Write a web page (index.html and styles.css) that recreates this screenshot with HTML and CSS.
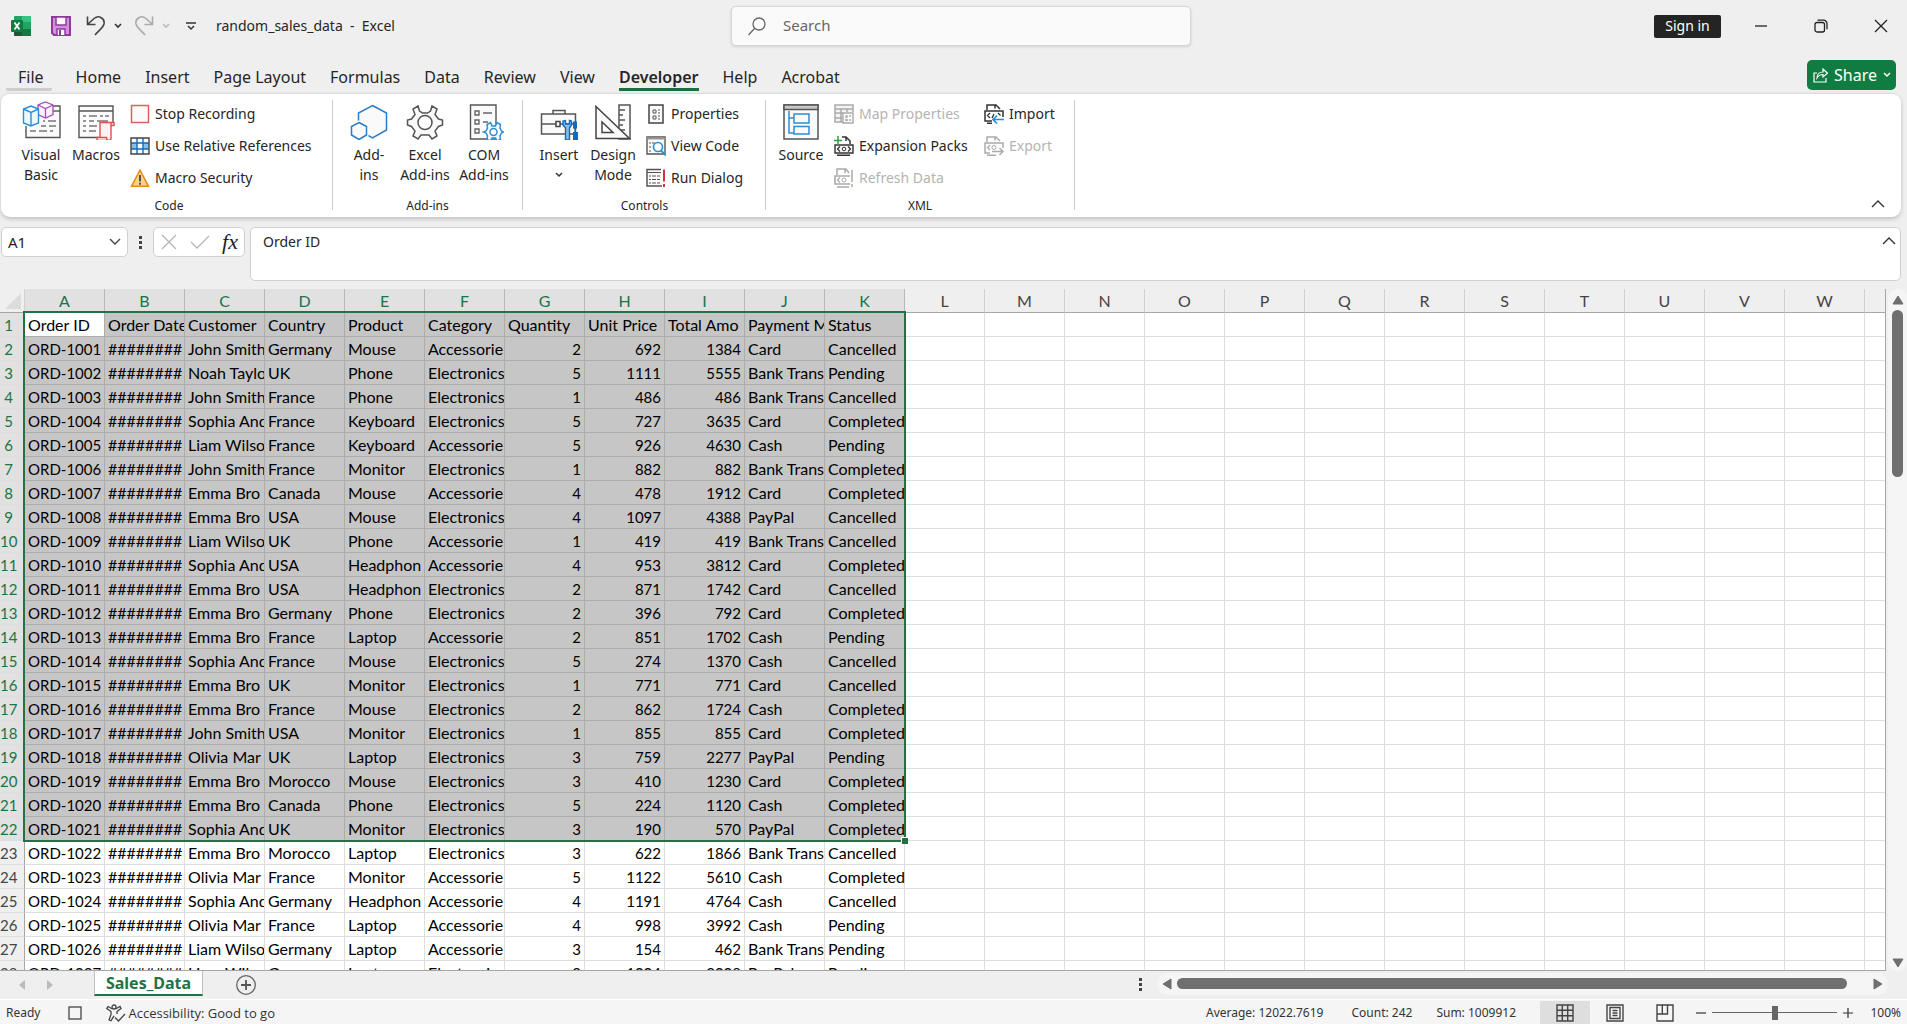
FILE: index.html
```html
<!DOCTYPE html>
<html lang="en">
<head>
<meta charset="utf-8">
<title>random_sales_data - Excel</title>
<link rel="stylesheet" href="styles.css">
</head>
<body>
<header class="titlebar">
  <div class="quick">
    <svg class="logo" width="20" height="20" viewBox="0 0 20 20" aria-hidden="true">
      <rect x="3" width="17" height="20" rx="1" fill="#21a366"/><path d="M11 0h8a1 1 0 0 1 1 1v5h-9z" fill="#33c481"/><path d="M3 6h8v7H3z" fill="#107c41"/><path d="M11 6h9v7h-9z" fill="#21a366"/><path d="M3 13h17v6a1 1 0 0 1-1 1H4a1 1 0 0 1-1-1z" fill="#185c37"/><path d="M11 13h9v6a1 1 0 0 1-1 1h-8z" fill="#107c41"/>
      <rect y="4" width="12" height="12" rx="1" fill="#107c41"/><path d="M3.500 6.500l5 7M8.500 6.500l-5 7" stroke="#fff" stroke-width="1.800"/>
    </svg>
    <button class="tool save" aria-label="Save"><svg width="20" height="20" viewBox="0 0 20 20"><path d="M1 1h18v18H3l-2-2z" fill="#d58fdb" stroke="#8e3a9d" stroke-width="2"/><path d="M5 1h10v8H5z" fill="#fafafa" stroke="#8e3a9d" stroke-width="1.500"/><path d="M6 19v-6h8v6" fill="#fafafa" stroke="#8e3a9d" stroke-width="1.500"/><path d="M9 14v5" stroke="#8e3a9d" stroke-width="2"/></svg></button>
    <button class="tool" aria-label="Undo"><svg width="20" height="22" viewBox="0 0 20 22"><path d="M1.500 1.500v8h8M2 9l6-5.500c5-4 11 0 10 5.500-1 4-6 7-9 11" fill="none" stroke="#444" stroke-width="1.600"/></svg></button>
    <button class="tool" aria-label="Undo list"><svg width="8" height="6" viewBox="0 0 8 6"><path d="M1 1l3 3 3-3" fill="none" stroke="#333" stroke-width="1.600"/></svg></button>
    <button class="tool redo" aria-label="Redo" disabled><svg width="20" height="22" viewBox="0 0 20 22"><path d="M18.500 1.500v8h-8M18 9l-6-5.500C7 -.5 1 3.500 2 9c1 4 6 7 9 11" fill="none" stroke="#aaa" stroke-width="1.600"/></svg></button>
    <button class="tool" aria-label="Redo list" disabled><svg width="8" height="6" viewBox="0 0 8 6"><path d="M1 1l3 3 3-3" fill="none" stroke="#bbb" stroke-width="1.600"/></svg></button>
    <button class="tool custom" aria-label="Customize Quick Access Toolbar"><svg width="10" height="9" viewBox="0 0 10 9"><path d="M0 1h10M2 4l3 3 3-3" fill="none" stroke="#333" stroke-width="1.500"/></svg></button>
    <span class="doc">random_sales_data&nbsp; -&nbsp; Excel</span>
  </div>
  <label class="search"><svg width="18" height="19" viewBox="0 0 18 19"><circle cx="11" cy="7" r="6" fill="none" stroke="#666" stroke-width="1.300"/><path d="M6.500 11.500L.5 18" stroke="#666" stroke-width="1.300"/></svg><input type="search" placeholder="Search" aria-label="Search"></label>
  <div class="window">
    <button class="signin">Sign in</button>
    <button class="win" aria-label="Minimize"><svg width="14" height="14" viewBox="0 0 14 14"><path d="M1 7h12" stroke="#222" stroke-width="1.300"/></svg></button>
    <button class="win" aria-label="Restore"><svg width="14" height="14" viewBox="0 0 14 14"><rect x="1" y="3.500" width="9.500" height="9.500" rx="2" fill="none" stroke="#222" stroke-width="1.300"/><path d="M3.500 1.200h6a3.500 3.500 0 0 1 3.500 3.500v5.500" fill="none" stroke="#222" stroke-width="1.300"/></svg></button>
    <button class="win" aria-label="Close"><svg width="14" height="14" viewBox="0 0 14 14"><path d="M1 1l12 12M13 1L1 13" stroke="#222" stroke-width="1.300"/></svg></button>
  </div>
</header>

<nav class="tabs" aria-label="Ribbon tabs">
  <button class="file">File</button><button>Home</button><button>Insert</button><button>Page Layout</button><button>Formulas</button><button>Data</button><button>Review</button><button>View</button><button class="active">Developer</button><button>Help</button><button>Acrobat</button>
  <button class="share"><svg width="15" height="15" viewBox="0 0 15 15"><path d="M4 5H1v9h12v-4M4 10c0-4 3-6 6-6V1l4.500 4.200L10 9V6.500C7.500 6.500 5.500 7.500 4 10z" fill="none" stroke="#fff" stroke-width="1.200"/></svg>Share<svg width="8" height="6" viewBox="0 0 8 6"><path d="M1 1l3 3 3-3" fill="none" stroke="#fff" stroke-width="1.500"/></svg></button>
</nav>

<section class="ribbon" aria-label="Developer">
  <div class="group code">
    <div class="tools">
      <button class="big w54"><svg width="40" height="40" viewBox="0 0 40 40"><path d="M5 26v11.500h34V6H32" fill="#fafafa" stroke="#555" stroke-width="1.400"/><path d="M32 11h7" stroke="#555" stroke-width="1.400"/><path d="M22 21h2M27 21h8M20 26h5M28 26h7M9 31h6M18 31h8M29 31h3" stroke="#777" stroke-width="1.400"/><path d="M24.500 2L32 5v9.500L24.500 18 17 14.500V5z M17 5l7.500 3.500L32 5M24.500 8.500V18" fill="#faf2fb" stroke="#a64db8" stroke-width="1.300"/><path d="M10 6l7.500 3v14L10 26l-7.500-3V9z M2.500 9l7.500 3.500L17.500 9M10 12.500V26" fill="#eff8fe" stroke="#2b8fd6" stroke-width="1.400"/></svg>Visual<br>Basic</button>
      <button class="big w56"><svg width="40" height="40" viewBox="0 0 40 40"><path d="M37 23V6H3v31.500h20" fill="#fafafa" stroke="#555" stroke-width="1.400"/><path d="M3 11h34" stroke="#555" stroke-width="1.400"/><path d="M7 16h3M13 16h8M24 16h3M29 16h4M7 21h3M13 21h5M21 21h11M7 26h3M13 26h8M7 31h3M13 31h7" stroke="#777" stroke-width="1.400"/><path d="M24 22.500h14v3h-3V38c0 2-1 2.500-2 2.500H21v-3h3z M24 37.500h6.500c0 2 1 3 2.500 3M35 25.500v-3" fill="#fdf1f1" stroke="#e04f4f" stroke-width="1.400"/></svg>Macros</button>
      <div class="stack">
        <button class="small"><svg width="20" height="20" viewBox="0 0 20 20"><rect x="1.500" y="1.500" width="17" height="17" fill="#fafafa" stroke="#e0605c" stroke-width="1.500"/></svg>Stop Recording</button>
        <button class="small"><svg width="20" height="20" viewBox="0 0 20 20"><path d="M1 2h18v16H1z" fill="#fafafa"/><path d="M1 7h6v6H1zM13 7h6v6h-6z" fill="#83beec"/><path d="M1 7h18M1 13h18M7 2v16M13 2v16" stroke="#0f6cbd" stroke-width="1.400"/><path d="M1 2h18v16H1z" fill="none" stroke="#444" stroke-width="1.400"/></svg>Use Relative References</button>
        <button class="small"><svg width="20" height="20" viewBox="0 0 20 20"><path d="M10 2l8.500 16.300h-17z" fill="#f9d48a" stroke="#e08a1e" stroke-width="1.500"/><path d="M10 7v6.500M10 14.800v2" stroke="#333" stroke-width="1.600"/></svg>Macro Security</button>
      </div>
    </div>
    <h2>Code</h2>
  </div>
  <div class="group addins">
    <div class="tools">
      <button class="big w56"><svg width="40" height="40" viewBox="0 0 40 40"><path d="M23.500 5.500L37.500 13v17l-14 8-14-8V13z" fill="#fafafa" stroke="#2b7cc8" stroke-width="1.500"/><path d="M10 22.500l7.500 4v8.500L10 39.500 2.500 35v-8.500z" fill="#fafafa" stroke="#fff" stroke-width="4"/><path d="M10 22.500l7.500 4v8.500L10 39.500 2.500 35v-8.500z" fill="#fafafa" stroke="#2b7cc8" stroke-width="1.500"/></svg>Add-<br>ins</button>
      <button class="big w56"><svg width="40" height="40" viewBox="0 0 40 40"><path d="M14.500 11L13 6l-5 3 2 5.500L6.500 19 2.500 20v5l4 1.500L10 31l-2 5 5 3 3-4h8l3 4 5-3-2-5 3.500-4.500 4-1.500v-5l-4-1-3.500-4.500 2-5.500-5-3-1.500 5-3 2h-5z" fill="#fafafa" stroke="#555" stroke-width="1.500"/><circle cx="20" cy="22.500" r="7" fill="#fff" stroke="#555" stroke-width="1.500"/></svg>Excel<br>Add-ins</button>
      <button class="big w62"><svg width="40" height="40" viewBox="0 0 40 40"><path d="M6.500 5H32v34H6.500z" fill="#fafafa" stroke="#555" stroke-width="1.400"/><path d="M11 11h4v4h-4zM11 20h4v4h-4zM11 29h4v4h-4zM19 13h9M19 22h5" fill="none" stroke="#666" stroke-width="1.400"/><path d="M26.500 22.500l1.500 3.500h3.500l1.500-3.500 3.500 2-.5 3.500 1.500 3 2 1-2 1-1.500 3 .5 3.500-3.500 1.500-1.500-3H28l-1.500 3-3.500-1.500.5-3.500-1.500-3-2.500-1 2.500-1 1.500-3-.5-3.500z" fill="#fafafa" stroke="#2b8fd6" stroke-width="1.500"/><circle cx="29.500" cy="32" r="3.500" fill="#fff" stroke="#2b8fd6" stroke-width="1.500"/></svg>COM<br>Add-ins</button>
    </div>
    <h2>Add-ins</h2>
  </div>
  <div class="group controls">
    <div class="tools">
      <button class="big w54"><svg width="40" height="40" viewBox="0 0 40 40"><path d="M2.500 14h34v20h-34zM14 14v-3.500h12V14M2.500 24h34" fill="#fafafa" stroke="#555" stroke-width="1.500"/><path d="M17 21.500h4v5h-4z" fill="#fff" stroke="#444" stroke-width="1.500"/><path d="M24 21v4l2.500 3v12h4V28l2-3v-4l-2-.5v3.500h-4v-3.500z" fill="#83beec" stroke="#0f6cbd" stroke-width="1.400"/><path d="M34 21.500h4V28l-1.500 1.500V32H39v8h-5v-8h1.500v-2.500L34 28z" fill="#0f6cbd"/></svg>Insert<svg class="down" width="8" height="6" viewBox="0 0 8 6"><path d="M1 1l3 3 3-3" fill="none" stroke="#333" stroke-width="1.500"/></svg></button>
      <button class="big w54"><svg width="40" height="40" viewBox="0 0 40 40"><path d="M26 5h11v34H26z" fill="#fafafa" stroke="#555" stroke-width="1.500"/><path d="M26 10h6M26 15h4M26 20h6M26 25h4M26 30h6" stroke="#555" stroke-width="1.400"/><path d="M3 6.500v32h33.500z" fill="#fafafa" stroke="#444" stroke-width="1.500"/><path d="M9 22v10.500h11z" fill="#fff" stroke="#444" stroke-width="1.500"/></svg>Design<br>Mode</button>
      <div class="stack">
        <button class="small"><svg width="20" height="20" viewBox="0 0 20 20"><path d="M3 1h14v18H3z" fill="#fafafa" stroke="#444" stroke-width="1.500"/><path d="M7 6h3v3H7zM7 12h3v3H7z" fill="none" stroke="#555"/><path d="M12 6h2M12 9h2M12 12h2M12 15h2" stroke="#555"/></svg>Properties</button>
        <button class="small"><svg width="20" height="20" viewBox="0 0 20 20"><path d="M1 1h18v17H1z" fill="#fafafa" stroke="#555" stroke-width="1.400"/><path d="M1 2.500h18" stroke="#999" stroke-width="2"/><path d="M3 7h2M6 7h3M3 11h2M3 15h2" stroke="#555"/><circle cx="12" cy="11" r="4.500" fill="#fff" stroke="#2b8fd6" stroke-width="1.600"/><path d="M15 14.500l5 5" stroke="#2b8fd6" stroke-width="1.800"/></svg>View Code</button>
        <button class="small"><svg width="20" height="20" viewBox="0 0 20 20"><path d="M16 18H1V1.500h14" fill="#fafafa" stroke="#555" stroke-width="1.500"/><path d="M1 4.500h14" stroke="#555"/><path d="M3 8h2M6 8h4M11 8h3M3 11.500h2M6 11.500h4M11 11.500h3M3 15h2M6 15h4M11 15h3" stroke="#555"/><path d="M18 1.500v12M18 16v3" stroke="#d13438" stroke-width="2"/></svg>Run Dialog</button>
      </div>
    </div>
    <h2>Controls</h2>
  </div>
  <div class="group xml">
    <div class="tools">
      <button class="big w54"><svg width="40" height="40" viewBox="0 0 40 40"><path d="M3 5h34v34H3z" fill="#fafafa" stroke="#555" stroke-width="1.500"/><path d="M3 5h34v4.500H3z" fill="#c8c8c8" stroke="#555" stroke-width="1.500"/><path d="M8 11v22h5M8 18h5M13 14h15v9H13zM13 26.500h15V34H13z" fill="none" stroke="#2b8fd6" stroke-width="1.500"/></svg>Source</button>
      <div class="stack first">
        <button class="small" disabled><svg width="20" height="20" viewBox="0 0 20 20"><path d="M9 18H1V1h18v7M1 5h18M1 9h8M1 14h8M7 5v13M13 5v3" fill="#f4f4f4" stroke="#aaa" stroke-width="1.500"/><path d="M9 9h10v10H9zM12 12h1v1h-1zM12 15.500h1v1h-1zM15 12h2M15 16h2" fill="#fff" stroke="#aaa" stroke-width="1.400"/></svg>Map Properties</button>
        <button class="small"><svg width="20" height="20" viewBox="0 0 20 20"><path d="M8 1h4l4 4v3M12 1v4" fill="none" stroke="#333" stroke-width="1.500"/><path d="M1 9h18v8H1zM3 19.300h13" fill="#fafafa" stroke="#333" stroke-width="1.400"/><path d="M6 10.500L3.500 13 6 15.500M14 10.500l2.500 2.500-2.500 2.500" fill="none" stroke="#333" stroke-width="1.300"/><circle cx="10" cy="13" r="1.800" fill="none" stroke="#333"/><path d="M4 0v9M0 4.500h8" stroke="#2e9f45" stroke-width="1.500"/></svg>Expansion Packs</button>
        <button class="small" disabled><svg width="20" height="20" viewBox="0 0 20 20"><path d="M3 7V1h9l3 4M11 1v4" fill="none" stroke="#aaa" stroke-width="1.500"/><path d="M16 8H1v8h15M3 19h12" fill="none" stroke="#aaa" stroke-width="1.600"/><path d="M6 9.500L3.500 12 6 14.500" fill="none" stroke="#aaa" stroke-width="1.300"/><circle cx="10" cy="12" r="2" fill="none" stroke="#aaa"/><path d="M18 2v12M18 16v3" stroke="#aaa" stroke-width="1.500"/></svg>Refresh Data</button>
      </div>
      <div class="stack">
        <button class="small"><svg width="20" height="20" viewBox="0 0 20 20"><path d="M3 6V1h9l4 4M11 1v3.500" fill="none" stroke="#333" stroke-width="1.500"/><path d="M8 17H1V7h18v6M3 19.300h5" fill="none" stroke="#333" stroke-width="1.500"/><path d="M6 9l-2.500 2.500L6 14M14 9l2.500 2.500M10 10l-2 4" fill="none" stroke="#333" stroke-width="1.300"/><path d="M20 15.500H9M13 11.500l-4 4 4 4" fill="none" stroke="#2b8fd6" stroke-width="1.700"/></svg>Import</button>
        <button class="small" disabled><svg width="20" height="20" viewBox="0 0 20 20"><path d="M3 6V1h9l4 4M11 1v3.500" fill="none" stroke="#aaa" stroke-width="1.500"/><path d="M6 17H1V7h18v5M3 19.300h9" fill="none" stroke="#aaa" stroke-width="1.500"/><path d="M6 9l-2.500 2.500L6 14" fill="none" stroke="#aaa" stroke-width="1.300"/><circle cx="10" cy="11.500" r="2" fill="none" stroke="#aaa"/><path d="M8 15.500h11M15.500 12l3.500 3.500-3.500 3.500" fill="none" stroke="#aaa" stroke-width="1.500"/></svg>Export</button>
      </div>
    </div>
    <h2>XML</h2>
  </div>
  <button class="collapse" aria-label="Collapse the ribbon"><svg width="14" height="8" viewBox="0 0 14 8"><path d="M1 7l6-6 6 6" fill="none" stroke="#333" stroke-width="1.400"/></svg></button>
</section>

<section class="formula" aria-label="Formula bar">
  <div class="namebox"><input value="A1" aria-label="Name box"><button aria-label="Name list"><svg width="12" height="8" viewBox="0 0 12 8"><path d="M1 1l5 5 5-5" fill="none" stroke="#444" stroke-width="1.400"/></svg></button></div>
  <svg class="dots" width="4" height="14" viewBox="0 0 4 14" aria-hidden="true"><path d="M0 0h3v3H0zM0 5h3v3H0zM0 10h3v3H0z" fill="#444"/></svg>
  <div class="entry">
    <button aria-label="Cancel" disabled><svg width="16" height="16" viewBox="0 0 16 16"><path d="M1 1l14 14M15 1L1 15" stroke="#b5b5b5" stroke-width="1.300"/></svg></button>
    <button aria-label="Enter" disabled><svg width="20" height="14" viewBox="0 0 20 14"><path d="M1 7l6 6L19 1" fill="none" stroke="#b5b5b5" stroke-width="1.300"/></svg></button>
    <button class="fx" aria-label="Insert function">fx</button>
  </div>
  <div class="content"><textarea aria-label="Formula" rows="1">Order ID</textarea><button aria-label="Collapse formula bar"><svg width="14" height="8" viewBox="0 0 14 8"><path d="M1 7l6-6 6 6" fill="none" stroke="#333" stroke-width="1.400"/></svg></button></div>
</section>

<main class="workspace">
  <div class="sheet">
    <table>
      <colgroup><col class="gutter"><col span="24"></colgroup>
      <thead><tr><th class="corner" aria-label="Select all"><svg width="16" height="16" viewBox="0 0 16 16"><path d="M16 0v16H0z" fill="#dcdcdc"/></svg></th><th class="s">A<th class="s">B<th class="s">C<th class="s">D<th class="s">E<th class="s">F<th class="s">G<th class="s">H<th class="s">I<th class="s">J<th class="s">K<th>L<th>M<th>N<th>O<th>P<th>Q<th>R<th>S<th>T<th>U<th>V<th>W<th></tr></thead>
      <tbody class="picked">
      <tr class="names"><th>1<td>Order ID<td>Order Date<td>Customer<td>Country<td>Product<td>Category<td>Quantity<td>Unit Price<td>Total Amo<td>Payment M<td>Status
      <tr><th>2<td>ORD-1001<td>########<td>John Smith<td>Germany<td>Mouse<td>Accessorie<td>2<td>692<td>1384<td>Card<td>Cancelled
      <tr><th>3<td>ORD-1002<td>########<td>Noah Taylor<td>UK<td>Phone<td>Electronics<td>5<td>1111<td>5555<td>Bank Trans<td>Pending
      <tr><th>4<td>ORD-1003<td>########<td>John Smith<td>France<td>Phone<td>Electronics<td>1<td>486<td>486<td>Bank Trans<td>Cancelled
      <tr><th>5<td>ORD-1004<td>########<td>Sophia And<td>France<td>Keyboard<td>Electronics<td>5<td>727<td>3635<td>Card<td>Completed
      <tr><th>6<td>ORD-1005<td>########<td>Liam Wilso<td>France<td>Keyboard<td>Accessorie<td>5<td>926<td>4630<td>Cash<td>Pending
      <tr><th>7<td>ORD-1006<td>########<td>John Smith<td>France<td>Monitor<td>Electronics<td>1<td>882<td>882<td>Bank Trans<td>Completed
      <tr><th>8<td>ORD-1007<td>########<td>Emma Bro<td>Canada<td>Mouse<td>Accessorie<td>4<td>478<td>1912<td>Card<td>Completed
      <tr><th>9<td>ORD-1008<td>########<td>Emma Bro<td>USA<td>Mouse<td>Electronics<td>4<td>1097<td>4388<td>PayPal<td>Cancelled
      <tr><th>10<td>ORD-1009<td>########<td>Liam Wilso<td>UK<td>Phone<td>Accessorie<td>1<td>419<td>419<td>Bank Trans<td>Cancelled
      <tr><th>11<td>ORD-1010<td>########<td>Sophia And<td>USA<td>Headphon<td>Accessorie<td>4<td>953<td>3812<td>Card<td>Completed
      <tr><th>12<td>ORD-1011<td>########<td>Emma Bro<td>USA<td>Headphon<td>Electronics<td>2<td>871<td>1742<td>Card<td>Cancelled
      <tr><th>13<td>ORD-1012<td>########<td>Emma Bro<td>Germany<td>Phone<td>Electronics<td>2<td>396<td>792<td>Card<td>Completed
      <tr><th>14<td>ORD-1013<td>########<td>Emma Bro<td>France<td>Laptop<td>Accessorie<td>2<td>851<td>1702<td>Cash<td>Pending
      <tr><th>15<td>ORD-1014<td>########<td>Sophia And<td>France<td>Mouse<td>Electronics<td>5<td>274<td>1370<td>Cash<td>Cancelled
      <tr><th>16<td>ORD-1015<td>########<td>Emma Bro<td>UK<td>Monitor<td>Electronics<td>1<td>771<td>771<td>Card<td>Cancelled
      <tr><th>17<td>ORD-1016<td>########<td>Emma Bro<td>France<td>Mouse<td>Electronics<td>2<td>862<td>1724<td>Cash<td>Completed
      <tr><th>18<td>ORD-1017<td>########<td>John Smith<td>USA<td>Monitor<td>Electronics<td>1<td>855<td>855<td>Card<td>Completed
      <tr><th>19<td>ORD-1018<td>########<td>Olivia Mar<td>UK<td>Laptop<td>Electronics<td>3<td>759<td>2277<td>PayPal<td>Pending
      <tr><th>20<td>ORD-1019<td>########<td>Emma Bro<td>Morocco<td>Mouse<td>Electronics<td>3<td>410<td>1230<td>Card<td>Completed
      <tr><th>21<td>ORD-1020<td>########<td>Emma Bro<td>Canada<td>Phone<td>Electronics<td>5<td>224<td>1120<td>Cash<td>Completed
      <tr><th>22<td>ORD-1021<td>########<td>Sophia And<td>UK<td>Monitor<td>Electronics<td>3<td>190<td>570<td>PayPal<td>Completed
      </tbody>
      <tbody>
      <tr><th>23<td>ORD-1022<td>########<td>Emma Bro<td>Morocco<td>Laptop<td>Electronics<td>3<td>622<td>1866<td>Bank Trans<td>Cancelled
      <tr><th>24<td>ORD-1023<td>########<td>Olivia Mar<td>France<td>Monitor<td>Accessorie<td>5<td>1122<td>5610<td>Cash<td>Completed
      <tr><th>25<td>ORD-1024<td>########<td>Sophia And<td>Germany<td>Headphon<td>Accessorie<td>4<td>1191<td>4764<td>Cash<td>Cancelled
      <tr><th>26<td>ORD-1025<td>########<td>Olivia Mar<td>France<td>Laptop<td>Accessorie<td>4<td>998<td>3992<td>Cash<td>Pending
      <tr><th>27<td>ORD-1026<td>########<td>Liam Wilso<td>Germany<td>Laptop<td>Accessorie<td>3<td>154<td>462<td>Bank Trans<td>Pending
      <tr><th>28<td>ORD-1027<td>########<td>Liam Wilso<td>Germany<td>Laptop<td>Electronics<td>2<td>1004<td>2008<td>PayPal<td>Pending
      </tbody>
    </table>
    <div class="selection"></div>
  </div>
  <div class="vscroll">
    <svg width="12" height="10" viewBox="0 0 12 10"><path d="M6 1l5 8H1z" fill="#6f6f6f" stroke="#6f6f6f" stroke-linejoin="round"/></svg>
    <div class="track"><div class="thumb"></div></div>
    <svg width="12" height="10" viewBox="0 0 12 10"><path d="M6 9L1 1h10z" fill="#6f6f6f" stroke="#6f6f6f" stroke-linejoin="round"/></svg>
  </div>
</main>

<div class="sheetbar">
  <div class="sheets">
    <button class="step" aria-label="Previous sheet" disabled><svg width="6" height="10" viewBox="0 0 6 10"><path d="M6 0v10L0 5z" fill="#bbb"/></svg></button>
    <button class="step" aria-label="Next sheet" disabled><svg width="6" height="10" viewBox="0 0 6 10"><path d="M0 0v10l6-5z" fill="#bbb"/></svg></button>
    <button class="sheet-tab">Sales_Data</button>
    <button class="add" aria-label="New sheet"><svg width="20" height="20" viewBox="0 0 20 20"><circle cx="10" cy="10" r="9.300" fill="none" stroke="#666" stroke-width="1.300"/><path d="M10 5v10M5 10h10" stroke="#555" stroke-width="1.800"/></svg></button>
  </div>
  <svg class="grip" width="4" height="14" viewBox="0 0 4 14" aria-hidden="true"><path d="M0 0h3v3H0zM0 5h3v3H0zM0 10h3v3H0z" fill="#444"/></svg>
  <div class="hscroll">
    <svg width="10" height="12" viewBox="0 0 10 12"><path d="M1 6l8-5v10z" fill="#6f6f6f" stroke="#6f6f6f" stroke-linejoin="round"/></svg>
    <div class="track"><div class="thumb"></div></div>
    <svg width="10" height="12" viewBox="0 0 10 12"><path d="M9 6L1 1v10z" fill="#6f6f6f" stroke="#6f6f6f" stroke-linejoin="round"/></svg>
  </div>
</div>

<footer class="status">
  <span class="ready">Ready</span>
  <button class="record" aria-label="Record macro"><svg width="14" height="14" viewBox="0 0 14 14"><rect x="1" y="1" width="12" height="12" fill="none" stroke="#444" stroke-width="1.300"/></svg></button>
  <button class="access"><svg width="20" height="18" viewBox="0 0 20 18"><circle cx="8" cy="3" r="2" fill="none" stroke="#444" stroke-width="1.300"/><path d="M6.500 5L2 2.500.8 4.500 5 7.500v3l-2 5.500 2 .8 3-5M9.500 5L14 2.500l1 2-4 3V10M9 13.500l3.500 3.500L19 10" fill="none" stroke="#444" stroke-width="1.300"/></svg>Accessibility: Good to go</button>
  <span class="stat avg">Average: 12022.7619</span><span class="stat">Count: 242</span><span class="stat">Sum: 1009912</span>
  <button class="view on" aria-label="Normal"><svg width="18" height="18" viewBox="0 0 18 18"><path d="M1 1h16v16H1zM1 6.300h16M1 11.700h16M6.300 1v16M11.700 1v16" fill="none" stroke="#444" stroke-width="1.400"/></svg></button>
  <button class="view" aria-label="Page layout"><svg width="18" height="18" viewBox="0 0 18 18"><path d="M1 1h16v16H1zM4 3.500h10v11H4zM6.500 6.500h5M6.500 9h5M6.500 11.500h5" fill="none" stroke="#444" stroke-width="1.400"/></svg></button>
  <button class="view" aria-label="Page break preview"><svg width="18" height="18" viewBox="0 0 18 18"><path d="M1 1h16v16H1zM1 10h10.500V1M6.300 1v9" fill="none" stroke="#444" stroke-width="1.400"/></svg></button>
  <button class="zoom" aria-label="Zoom out"><svg width="10" height="10" viewBox="0 0 10 10"><path d="M0 5h10" stroke="#333" stroke-width="1.200"/></svg></button>
  <input type="range" min="0" max="100" value="50" aria-label="Zoom">
  <button class="zoom" aria-label="Zoom in"><svg width="10" height="10" viewBox="0 0 10 10"><path d="M0 5h10M5 0v10" stroke="#333" stroke-width="1.200"/></svg></button>
  <span class="percent">100%</span>
</footer>
</body>
</html>
```
FILE: styles.css
```css
* { box-sizing: border-box; }
body {
  margin: 0;
  height: 100vh;
  display: flex;
  flex-direction: column;
  overflow: hidden;
  background: #efefef;
  color: #262626;
  font: 14px/20px "Noto Sans", "Open Sans", sans-serif;
}
button, input, textarea { font: inherit; color: inherit; }
button { border: 0; padding: 0; background: none; }
svg { display: block; flex: none; }

/* Title bar */
.titlebar { display: grid; grid-template-columns: 731fr 460px 716fr; height: 52px; flex: none; }
.quick { display: flex; align-items: center; padding-left: 11px; }
.tool { margin-left: 8px; }
.tool.save { margin: 0 7px 0 20px; }
.tool.redo { margin-left: 12px; }
.tool.custom { margin-left: 16px; }
.doc { margin-left: 20px; white-space: pre; }
.search {
  display: flex; align-items: center; gap: 17px; height: 40px; margin-top: 6px; padding-left: 16px;
  background: #fafafa; border: 1px solid #d6d6d6; border-radius: 5px; box-shadow: 0 1px 3px #00000022;
}
.search input { flex: 1; min-width: 0; border: 0; outline: 0; padding: 0 0 2px; background: none; font-size: 15px; }
.search input::placeholder { color: #666; opacity: 1; }
.window { display: flex; align-items: center; justify-content: flex-end; gap: 8px; }
.signin { height: 23px; width: 67px; margin-right: 6px; background: #242424; color: #fff; border-radius: 2px; }
.win { width: 52px; height: 40px; display: grid; place-items: center; }

/* Ribbon tabs */
.tabs { display: flex; align-items: flex-start; gap: 24px; height: 41px; flex: none; padding: 9px 11px 0 6px; font-size: 16px; }
.tabs button { height: 30px; padding-top: 4px; white-space: nowrap; border-bottom: 3px solid transparent; line-height: 22px; }
.tabs .file { padding: 4px 8px 0 12px; border-radius: 2px; border-color: #cdcdcd; }
.tabs .active { font-weight: 600; border-color: #1a6e3f; }
.tabs .share {
  display: flex; align-items: center; gap: 6px; width: 89px; height: 30px; margin: -1px 0 0 auto; padding: 0 0 0 6px;
  border: 0; border-radius: 5px; background: #107c41; color: #fff;
}

/* Ribbon */
.ribbon {
  position: relative; display: flex; height: 124px; flex: none; margin: 0 6px 10px 1px; padding: 6px 0 0 1px;
  background: #fff; border-top: 1px solid #dcdcdc; border-radius: 9px; box-shadow: 0 2px 4px #00000033;
}
.group { display: flex; flex-direction: column; height: 110px; border-right: 1px solid #ccc; }
.code { width: 331px; padding-left: 12px; }
.addins { width: 190px; padding-left: 8px; }
.controls { width: 243px; padding-left: 9px; }
.xml { width: 309px; padding-left: 8px; }
.group h2 { margin: auto 0 -6px -8px; font: 12px/20px "Noto Sans", sans-serif; text-align: center; }
.tools { display: flex; }
.big { display: flex; flex-direction: column; align-items: center; height: 86px; line-height: 20px; text-align: center; white-space: nowrap; }
.big > svg:first-child { margin: 0 0 5px; }
.big .down { margin-top: 7px; }
.w54 { width: 54px; }
.w56 { width: 56px; }
.w62 { width: 62px; }
.stack { margin: -2px 0 0 6px; }
.stack.first { width: 144px; }
.small { display: flex; align-items: center; gap: 5px; height: 32px; white-space: nowrap; }
.small:disabled { color: #b4b4b4; }
.collapse { position: absolute; right: 16px; bottom: 9px; }

/* Formula bar */
.formula { display: flex; align-items: flex-start; height: 54px; flex: none; margin: 0 6px 8px 1px; }
.namebox, .entry, .content { display: flex; background: #fff; border: 1px solid #d0d0d0; border-radius: 5px; }
.namebox { width: 127px; height: 30px; align-items: center; padding: 0 6px; font-size: 15px; }
.namebox input { flex: 1; min-width: 0; border: 0; outline: 0; padding: 0; background: none; }
.dots { margin: 9px 10px 0 11px; }
.entry { width: 92px; height: 30px; align-items: center; justify-content: space-between; padding: 0 6px 0 7px; }
.fx { font: italic 22px/26px "Liberation Serif", serif; color: #222; }
.content { flex: 1; height: 54px; margin-left: 5px; padding: 4px 4px 0 12px; align-items: flex-start; }
.content textarea { flex: 1; height: 40px; border: 0; outline: 0; padding: 0; resize: none; background: none; }
.content button { margin-top: 5px; }

/* Grid */
.workspace { display: flex; flex: 1; min-height: 0; }
.sheet {
  position: relative; flex: 1; min-width: 0; overflow: hidden; background-color: #fff;
  border-right: 1px solid #a6a6a6; border-bottom: 1px solid #a6a6a6;
  background-image: linear-gradient(to left, #dedede 1px, transparent 1px), linear-gradient(to top, #dedede 1px, transparent 1px);
  background-size: 80px 24px; background-position: 25px 0;
}
table { width: 1945px; table-layout: fixed; border-collapse: separate; border-spacing: 0; font: 16px/22px Lato, Carlito, sans-serif; }
col { width: 80px; }
.gutter { width: 25px; }
th, td { height: 24px; padding: 0 3px; overflow: hidden; white-space: nowrap; text-align: left; border-right: 1px solid #dedede; border-bottom: 1px solid #dedede; }
td { color: #000; }
th { font-weight: 400; color: #444; background: #efefef; }
thead th { padding: 0; text-align: center; border-right-color: #d0d0d0; border-bottom-color: #a6a6a6; }
thead .corner { padding: 0 3px 0 5px; }
thead .s, .picked th { background: #e0e1e0; color: #217346; border-right-color: #b8b8b8; }
tbody th { padding: 0 7px 0 0; text-align: center; font-size: 15px; border-right-color: #a6a6a6; }
.picked td { background: #c6c6c6; border-color: #acacac; }
.picked .names td:nth-child(2) { background: #fff; }
tr:not(.names) td:nth-child(2) { font-size: 15px; }
tr:not(.names) td:nth-child(n+8):nth-child(-n+10) { text-align: right; font-size: 15px; }
td:nth-child(12) { overflow: visible; }
.selection { position: absolute; left: 23px; top: 22px; width: 883px; height: 531px; border: 2px solid #217346; }
.selection::after { content: ""; position: absolute; right: -4px; bottom: -4px; width: 6px; height: 6px; background: #217346; border: 1px solid #fff; border-width: 1px 0 0 1px; }

/* Scrollbars */
.track { flex: 1; display: flex; }
.thumb { background: #6f6f6f; border-radius: 6px; }
.vscroll { display: flex; flex-direction: column; align-items: center; gap: 5px; width: 19px; margin-left: 2px; padding: 6px 0 3px; background: #f5f5f5; border-radius: 9px; }
.vscroll .thumb { width: 11px; height: 26%; }
.hscroll { display: flex; align-items: center; gap: 5px; width: 731px; height: 22px; padding: 0 5px; background: #f5f5f5; border-radius: 11px; margin: 0 19px 3px 0; }
.hscroll .thumb { width: 97%; height: 11px; }

/* Sheet tabs */
.sheetbar { display: flex; align-items: center; height: 28px; flex: none; }
.sheets { display: flex; flex: 1; align-items: center; height: 28px; padding-left: 19px; }
.step { width: 28px; }
.sheet-tab { align-self: flex-start; width: 109px; height: 25px; margin: 0 33px 0 19px; background: #fff; border: 1px solid #c0c0c0; border-width: 0 1px 2px; border-bottom-color: #217346; color: #217346; font: 700 16px/20px "Noto Sans", sans-serif; }
.grip { margin-right: 14px; }

/* Status bar */
.status { display: flex; align-items: center; height: 25px; flex: none; padding: 1px 6px 0; background: #f5f5f5; border-top: 1px solid #fff; font-size: 12px; color: #333; white-space: nowrap; }
.record { margin: 0 24px 0 28px; }
.access { display: flex; align-items: center; gap: 2px; font: 13px/20px "Open Sans", sans-serif; }
.stat { margin-right: 24px; }
.stat.avg { margin: 0 28px 0 auto; }
.view { width: 50px; height: 24px; display: grid; place-items: center; }
.view.on { background: #dedede; }
.zoom { margin: 0 6px; }
.status input { appearance: none; width: 125px; height: 14px; margin: 0; background: linear-gradient(#666, #666) center / 100% 1px no-repeat; }
.status input::-webkit-slider-thumb { appearance: none; width: 6px; height: 14px; background: #666; }
.percent { width: 32px; margin-left: 10px; text-align: right; }
```
